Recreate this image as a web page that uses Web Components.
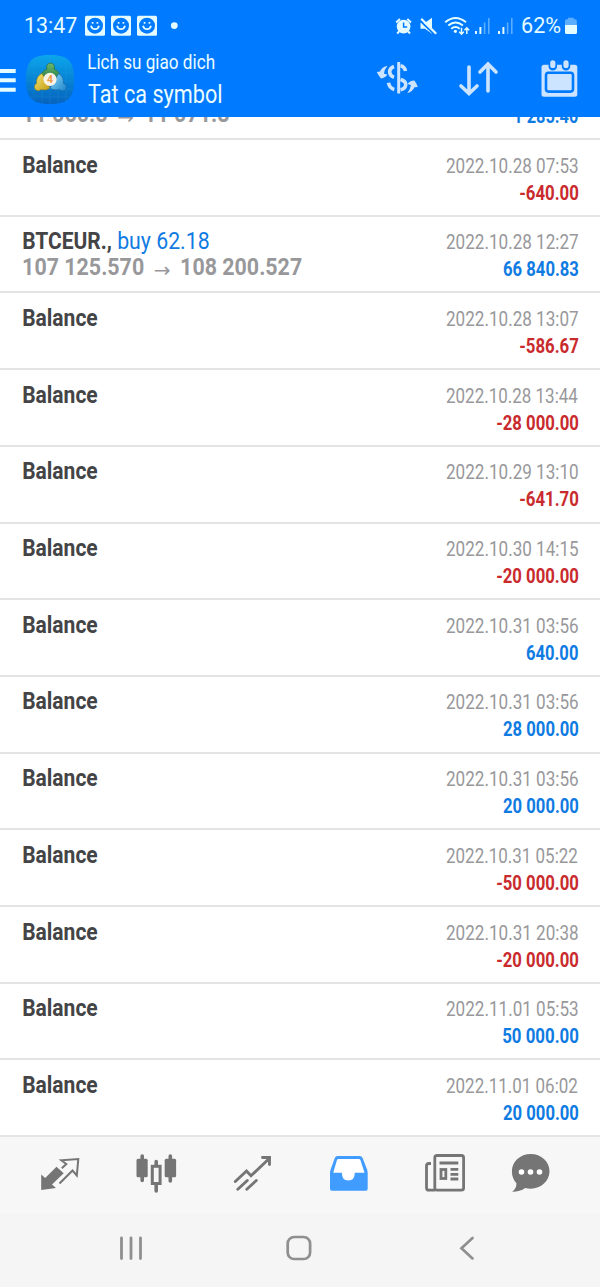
<!DOCTYPE html>
<html lang="vi">
<head>
<meta charset="UTF-8">
<title>Lich su giao dich</title>
<style>
    body {
        margin: 0;
        background: #fff;
        font-family: Roboto, "Liberation Sans", sans-serif;
    }
</style>
</head>
<body>
<history-app></history-app>

<script>
// Condensed text: squeezes its content so that the ink is "w" pixels wide
class FitText extends HTMLElement {
    constructor() {
        super();
        this.attachShadow({ mode: 'open' });
    }

    connectedCallback() {
        const width = Number(this.getAttribute('w'));
        this.shadowRoot.innerHTML = `
            <style>
                :host { display: block; flex: none; width: ${width}px; white-space: nowrap; }
                span { display: block; width: max-content; transform-origin: 0 50%; }
            </style>
            <span><slot></slot></span>
        `;
        const style = getComputedStyle(this);
        const ctx = document.createElement('canvas').getContext('2d');
        ctx.font = `${style.fontWeight} ${style.fontSize} ${style.fontFamily}`;
        const m = ctx.measureText(this.textContent);
        const scale = width / (m.actualBoundingBoxLeft + m.actualBoundingBoxRight);
        this.shadowRoot.querySelector('span').style.transform =
            `scaleX(${scale}) translateX(${m.actualBoundingBoxLeft}px)`;
    }
}
customElements.define('fit-text', FitText);


class StatusBar extends HTMLElement {
    constructor() {
        super();
        this.attachShadow({ mode: 'open' });
    }

    connectedCallback() {
        const smiley = x => `
            <rect x="${x}" y="15.7" width="20" height="20" rx="1.5"/>
            <circle cx="${x + 10}" cy="25.7" r="8" fill="#007aff"/>
            <path d="M${x + 6} 25.8a4.1 4.3 0 0 0 8 0M${x + 7.6} 22v1.8M${x + 12.4} 22v1.8" fill="none" stroke="#e4fcff" stroke-width="1.7"/>`;
        const signal = x => `
            <path d="M${x} 31h2v3h-2zM${x + 4.4} 27h2v7h-2z"/>
            <path d="M${x + 8.8} 22.5h1.6v11.5h-1.6zM${x + 13} 18h1.6v16h-1.6z" opacity=".4"/>`;
        this.shadowRoot.innerHTML = `
            <style>
                :host {
                    display: flex;
                    justify-content: space-between;
                    height: 50px;
                    padding: 0 22px 0 25px;
                    box-sizing: border-box;
                    color: #e4fcff;
                    fill: #e4fcff;
                    font-size: 22px;
                    line-height: 51px;
                }
                div { display: flex; }
                svg { display: block; }
            </style>
            <div>
                <fit-text w="52">13:47</fit-text>
                <svg width="106" height="50" viewBox="77 0 106 50">
                    ${smiley(85)}${smiley(111)}${smiley(137)}
                    <circle cx="174.3" cy="25.6" r="3.4"/>
                </svg>
            </div>
            <div>
                <svg width="132" height="50" viewBox="390 0 132 50">
                    <circle cx="403.6" cy="26.6" r="6.9"/>
                    <path d="M396.2 22.4l3.7-3.4M411 22.4l-3.7-3.4M399 31.5l-1.8 2M408.2 31.5l1.8 2" stroke="#e4fcff" stroke-width="2"/>
                    <path d="M403.6 22.5v4.6h3.6" fill="none" stroke="#007aff" stroke-width="1.5"/>
                    <path d="M420.500 22.800h4.500l7-5v16l-7-5h-4.500z"/>
                    <path d="M419.800 20.400l15 14.400" stroke="#007aff" stroke-width="2"/>
                    <path d="M421.200 18.800l15 15" stroke="#e4fcff" stroke-width="2.200"/>
                    <path d="M445.2 22.2q10.400-8.500 20.800 0M448.300 25.500q7.300-6 14.600 0M451.200 28.700q4.300-3.300 8.500 0" fill="none" stroke="#e4fcff" stroke-width="2"/>
                    <circle cx="455.4" cy="31.300" r="1.600"/>
                    <path d="M461.500 27.800v6.200M459.200 31.800l2.300 2.400 2.300-2.400M466.800 34v-5.800M464.500 30.300l2.300-2.400 2.300 2.400" fill="none" stroke="#e4fcff" stroke-width="1.500"/>
                    ${signal(475)}${signal(498)}
                </svg>
                <fit-text w="39">62%</fit-text>
                <svg width="17" height="50" viewBox="561 0 17 50">
                    <path d="M565 25v-4.300q0-1.500 1.500-1.500h1.500v-1.500h5.800v1.500h1.500q1.500 0 1.500 1.500v4.300z" opacity=".4"/>
                    <path d="M565 25h12v7.500q0 1.500-1.500 1.500h-9q-1.500 0-1.500-1.500z"/>
                </svg>
            </div>
        `;
    }
}
customElements.define('status-bar', StatusBar);


class TitleBar extends HTMLElement {
    constructor() {
        super();
        this.attachShadow({ mode: 'open' });
    }

    connectedCallback() {
        this.shadowRoot.innerHTML = `
            <style>
                :host { display: flex; height: 66.500px; color: #ecfdff; }
                svg { display: block; flex: none; }
                .titles { margin-left: 11px; flex: 1; }
                .small { font-size: 20.500px; line-height: 24px; }
                .large { font-size: 26px; line-height: 38px; margin-top: 1px; }
                .actions { display: flex; }
            </style>
            <svg width="77" height="66" viewBox="0 50 77 66">
                <defs>
                    <linearGradient id="tile" x2="0" y2="1">
                        <stop offset="0" stop-color="#0ba6ec"/>
                        <stop offset=".5" stop-color="#0783d4"/>
                        <stop offset="1" stop-color="#0663bd"/>
                    </linearGradient>
                    <linearGradient id="green" x2="0" y2="1"><stop offset="0" stop-color="#6fb86b"/><stop offset="1" stop-color="#277f4a"/></linearGradient>
                    <linearGradient id="gold" x2="1" y2="1"><stop offset="0" stop-color="#f2e573"/><stop offset="1" stop-color="#c49a12"/></linearGradient>
                    <linearGradient id="sky" x2="1" y2="1"><stop offset="0" stop-color="#8fd6f4"/><stop offset="1" stop-color="#1d86cc"/></linearGradient>
                </defs>
                <path d="M0 70.900h15.700M0 80.300h15.700M0 89.700h15.700" stroke="#e4fcff" stroke-width="4"/>
                <path d="M50 55c18 0 24 6 24 24.500S68 104 50 104 26 98 26 79.500 32 55 50 55z" fill="url(#tile)"/>
                <path d="M34 58v43M42 56v47M50 55.500v48M58 56v47M66 58v43M28 65h44M26.500 73h47M26.500 81h47M27 89h46M30 97h40" stroke="#2fa5e6" stroke-width=".6" opacity=".35"/>
                <path d="M41 79q-.5-8 6-10a4 4 0 1 1 7 0q6.500 2 6 10l-9-2z" fill="url(#green)" stroke="#24694b" stroke-width=".7"/>
                <path d="M42 73.500q-6 2.500-5.500 10a3.800 3.800 0 1 0 4.500 6q5 1.500 9-1.500l-3-6z" fill="url(#gold)" stroke="#8c8222" stroke-width=".7"/>
                <path d="M58.500 73.500q5.500 3 5 10a3.800 3.800 0 1 1-4 6q-6 1.500-9.500-1.500l4-6z" fill="url(#sky)" stroke="#1567a8" stroke-width=".7"/>
                <circle cx="50" cy="79.300" r="6.600" fill="#f7f3e8"/>
                <text x="50" y="83" text-anchor="middle" font-size="10.500" font-weight="700" fill="#ee9a48">4</text>
            </svg>
            <div class="titles">
                <fit-text class="small" w="126">Lich su giao dich</fit-text>
                <fit-text class="large" w="133.500">Tat ca symbol</fit-text>
            </div>
            <div class="actions">
                <svg width="82" height="66" viewBox="370 50 82 66" fill="none" stroke="#cce4ff">
                    <path d="M398.700 62v31.500" stroke-width="3"/>
                    <path d="M394 66.500q-4.300 1.500-4.300 5.500 0 3.600 4.300 5.300M388.500 82.800q1 5.500 5.800 6.600M400.500 65.700q4.200.8 5 5.300M400.500 79.500q5.200 1.500 5.200 5 0 4.200-5.200 5.300" stroke-width="3.600"/>
                    <path d="M387.500 65.700q-5.500 1-7.500 5.700l-3.200.5q1.600 3.500 4.200 6.700 4.800-.8 6.300-4l-3.300-.8q.3-4.500 3.500-8.100zM407.300 93.200q5.200-1.500 7.200-6l3.300-.3q-1.200-3.500-3.400-6.500-5 .3-7 3.700l3.500.8q-.6 4.500-3.600 8.300z" fill="#cce4ff" stroke="none"/>
                </svg>
                <svg width="84" height="66" viewBox="452 50 84 66" fill="none" stroke="#cce4ff" stroke-width="3.600" stroke-linecap="round">
                    <path d="M469 67v26M461 86l8 7.500 8-7.500M488 91V64M480 72l8-8 8 8"/>
                </svg>
                <svg width="64" height="66" viewBox="536 50 64 66">
                    <rect x="541.500" y="64.800" width="35.800" height="32" rx="2.500" fill="#cce4ff"/>
                    <path d="M552.800 62.800v3.500M566 62.800v3.500" stroke="#007aff" stroke-width="8.500" stroke-linecap="round"/>
                    <path d="M552.800 62.800v2.600M566 62.800v2.600" stroke="#cce4ff" stroke-width="5.200" stroke-linecap="round"/>
                    <rect x="546" y="72.800" width="27" height="18.800" rx="2.500" fill="#cce4ff" stroke="#007aff" stroke-width="2.600"/>
                </svg>
            </div>
        `;
    }
}
customElements.define('title-bar', TitleBar);


class DealRow extends HTMLElement {
    constructor() {
        super();
        this.attachShadow({ mode: 'open' });
    }

    connectedCallback() {
        const date = this.getAttribute('date');
        const amount = this.getAttribute('amount');
        const color = amount.startsWith('-') ? '#c92a2d' : '#0f7be2';
        this.shadowRoot.innerHTML = `
            <style>
                :host {
                    display: flex;
                    flex: none;
                    justify-content: space-between;
                    height: 76.690px;
                    padding: 10.600px 22px 0;
                    box-sizing: border-box;
                    border-bottom: 2px solid #e4e4e6;
                    line-height: 27px;
                }
                .result {
                    display: flex;
                    flex-direction: column;
                    align-items: flex-end;
                    padding-top: 2px;
                }
                .date { height: 27px; font-size: 21px; color: #98989b; }
                .amount { font-size: 20px; font-weight: 700; line-height: 26px; color: ${color}; }
            </style>
            <div><slot></slot></div>
            <div class="result">
                <div class="date">${date ? `<fit-text w="132">${date}</fit-text>` : ''}</div>
                <fit-text class="amount" w="${this.getAttribute('amount-w')}">${amount}</fit-text>
            </div>
        `;
    }
}
customElements.define('deal-row', DealRow);


class TabBar extends HTMLElement {
    constructor() {
        super();
        this.attachShadow({ mode: 'open' });
    }

    connectedCallback() {
        this.shadowRoot.innerHTML = `
            <style>
                :host {
                    display: flex;
                    height: 76px;
                    padding: 0 12px;
                    box-sizing: border-box;
                    background: #f7f7f7;
                }
                svg { display: block; flex: none; width: 96px; height: 76px; }
            </style>
            <svg viewBox="12 1137 96 76" fill="none" stroke="#757575">
                <path d="M41.200 1174.500l4 3.500 11.300-11.300 7.200 6.500-11.700 11.300 4 3.500-14.800 2z" fill="#757575" stroke="none"/>
                <path d="M61.800 1168.200l4.500-4.200-5-3.800 17-1.200-1.500 16.500-4.300-5-13 13" stroke-width="2"/>
            </svg>
            <svg viewBox="108 1137 96 76" fill="none" stroke="#757575" stroke-linecap="round">
                <path d="M142.200 1156v24.500M156.200 1161.500v5M156.200 1185v6M170.300 1156v25" stroke-width="3.600"/>
                <rect x="136.500" y="1158.700" width="11.200" height="18.500" rx="1.500" fill="#757575" stroke="none"/>
                <rect x="164.700" y="1158.700" width="11.400" height="18.500" rx="1.500" fill="#757575" stroke="none"/>
                <rect x="152.300" y="1166.300" width="7.800" height="17.200" stroke-width="3" fill="#f7f7f7"/>
            </svg>
            <svg viewBox="204 1137 96 76" fill="none" stroke="#757575" stroke-width="2.900" stroke-linecap="round">
                <path d="M235.300 1181.500l11.200-10.500 4.500 4.800 18.500-17.500M262.500 1157.500h7v7M237.800 1189.300l9.500-8.800M246.800 1189.300l9.500-8.800"/>
            </svg>
            <svg viewBox="300 1137 96 76">
                <path d="M337.500 1156h22q2.300 0 3.200 2.200l4.300 11q.7 2 .7 4v15q0 2.600-2.600 2.600h-32.500q-2.600 0-2.600-2.600v-15q0-2 .7-4l4-11q.8-2.200 2.800-2.200z" fill="#419cff"/>
                <path d="M338.300 1159h20.500q1.200 0 1.700 1.200l4 12.500h-9.700q0 7.800-6.500 7.800t-6.400-7.800h-8.700l3.700-12.500q.4-1.200 1.400-1.200z" fill="#fff"/>
            </svg>
            <svg viewBox="396 1137 96 76" fill="none" stroke="#757575" stroke-width="2.800">
                <rect x="434.800" y="1155.500" width="28.800" height="34.700" rx="2.200"/>
                <path d="M435 1190.200h-6q-2.500 0-2.500-2.500v-21.700q0-2.500 2.500-2.500h2M439.500 1163h18.800M450.500 1169.300h7.800M450.500 1174.300h7.800M450.500 1179h7.800"/>
                <rect x="441" y="1169.500" width="4.800" height="9"/>
            </svg>
            <svg viewBox="492 1137 96 76">
                <path d="M530.700 1154c10.500 0 18.800 7.700 18.800 17.300s-8.300 17.400-18.800 17.400q-3 0-5.500-.7-5.800 4-13 3.800 4.500-3.500 4.200-8.500-4.500-5-4.500-12c0-9.600 8.300-17.300 18.800-17.300z" fill="#757575"/>
                <g fill="#fff"><circle cx="521.500" cy="1172" r="2.800"/><circle cx="530.500" cy="1172" r="2.800"/><circle cx="539.500" cy="1172" r="2.800"/></g>
            </svg>
        `;
    }
}
customElements.define('tab-bar', TabBar);


class NavButtons extends HTMLElement {
    constructor() {
        super();
        this.attachShadow({ mode: 'open' });
    }

    connectedCallback() {
        this.shadowRoot.innerHTML = `
            <style>
                :host {
                    display: flex;
                    justify-content: center;
                    height: 74px;
                    background: #f5f5f5;
                }
                svg { display: block; width: 168px; height: 74px; }
            </style>
            <svg viewBox="48 1213 168 74" fill="none" stroke="#8f8f8f" stroke-width="2.800" stroke-linecap="round">
                <path d="M121.500 1238v20.500M131 1238v20.500M140.500 1238v20.500"/>
            </svg>
            <svg viewBox="216 1213 168 74" fill="none" stroke="#8f8f8f" stroke-width="2.700">
                <rect x="287.700" y="1237" width="22.400" height="22" rx="6.500"/>
            </svg>
            <svg viewBox="384 1213 168 74" fill="none" stroke="#8f8f8f" stroke-width="2.700" stroke-linecap="round">
                <path d="M472.500 1238l-11 10.200 11 10.200"/>
            </svg>
        `;
    }
}
customElements.define('nav-buttons', NavButtons);


// date, amount, ink width of the amount
const deals = [
    ['2022.10.28 07:53', '-640.00', 58.5],
    ['2022.10.28 12:27', '66 840.83', 75.5],
    ['2022.10.28 13:07', '-586.67', 58.5],
    ['2022.10.28 13:44', '-28 000.00', 81.5],
    ['2022.10.29 13:10', '-641.70', 58.5],
    ['2022.10.30 14:15', '-20 000.00', 81.5],
    ['2022.10.31 03:56', '640.00', 52],
    ['2022.10.31 03:56', '28 000.00', 75.5],
    ['2022.10.31 03:56', '20 000.00', 75.5],
    ['2022.10.31 05:22', '-50 000.00', 81.5],
    ['2022.10.31 20:38', '-20 000.00', 81.5],
    ['2022.11.01 05:53', '50 000.00', 75.5],
    ['2022.11.01 06:02', '20 000.00', 75.5]
];

class HistoryApp extends HTMLElement {
    constructor() {
        super();
        this.attachShadow({ mode: 'open' });
    }

    connectedCallback() {
        const balance = '<fit-text class="name" w="74.500">Balance</fit-text>';
        const trade = `
            <div class="line">
                <fit-text class="name" w="88">BTCEUR.,</fit-text>
                <fit-text class="side" w="91">buy 62.18</fit-text>
            </div>
            <div class="line price">
                <fit-text w="120.500">107 125.570</fit-text>
                <span>→</span>
                <fit-text w="120.500">108 200.527</fit-text>
            </div>`;
        this.shadowRoot.innerHTML = `
            <style>
                :host {
                    display: flex;
                    flex-direction: column;
                    width: 600px;
                    height: 1287px;
                    overflow: hidden;
                }
                header { flex: none; height: 116.500px; background: #007aff; }
                main {
                    display: flex;
                    flex: 1;
                    flex-direction: column;
                    justify-content: flex-end;
                    overflow: hidden;
                    min-height: 0;
                }
                .name { font-size: 24.500px; font-weight: 700; color: #444446; margin-left: .6px; }
                .side { font-size: 24.500px; color: #0f7be2; }
                .line { display: flex; height: 27px; gap: 7px; }
                .price { font-size: 24px; font-weight: 700; color: #98989b; gap: 0; margin-left: .6px; }
                .price span { width: 38px; text-align: center; font: 400 20px/33px "DejaVu Sans", sans-serif; height: 27px; }
                tab-bar, nav-buttons { flex: none; }
            </style>
            <header>
                <status-bar></status-bar>
                <title-bar></title-bar>
            </header>
            <main>
                <deal-row amount="1 285.40" amount-w="64">
                    <div class="line"></div>
                    <div class="line price">
                        <fit-text w="84">11 060.5</fit-text>
                        <span>→</span>
                        <fit-text w="84">11 071.8</fit-text>
                    </div>
                </deal-row>
                ${deals.map(([date, amount, width], i) => `
                    <deal-row date="${date}" amount="${amount}" amount-w="${width}">${i === 1 ? trade : balance}</deal-row>
                `).join('')}
            </main>
            <tab-bar></tab-bar>
            <nav-buttons></nav-buttons>
        `;
    }
}
customElements.define('history-app', HistoryApp);
</script>
</body>
</html>
